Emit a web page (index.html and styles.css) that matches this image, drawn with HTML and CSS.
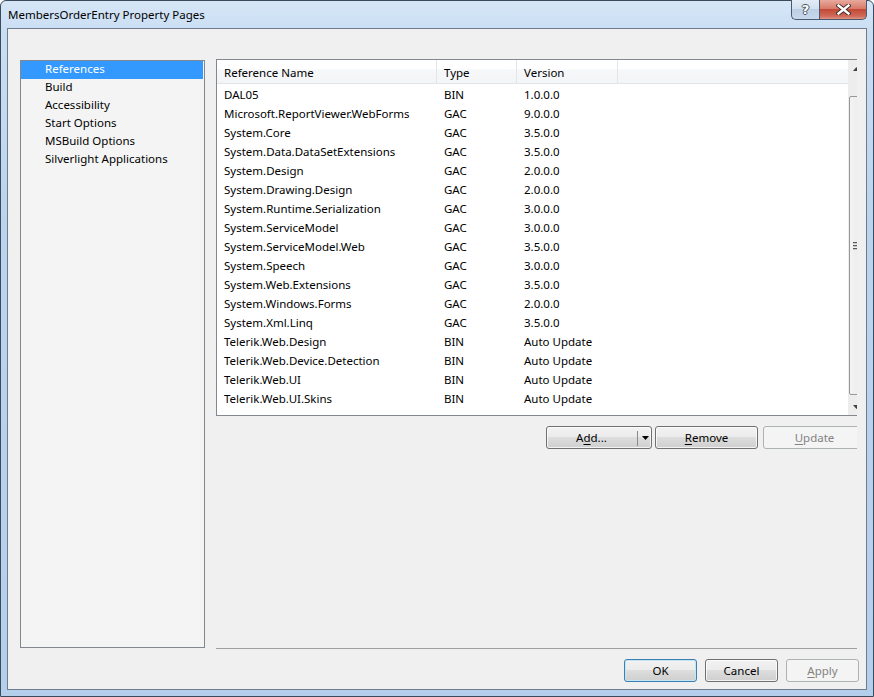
FILE: index.html
```html
<!DOCTYPE html>
<html>
<head>
<meta charset="utf-8">
<title>MembersOrderEntry Property Pages</title>
<link rel="stylesheet" href="styles.css">
</head>
<body>
<div class="window">
  <div class="titlebar">
    <span class="title">MembersOrderEntry Property Pages</span>
    <div class="caption-buttons">
      <div class="cbtn help"><span class="qmark">?</span></div>
      <div class="cbtn close">
        <svg width="15" height="11" viewBox="0 0 15 11">
          <path d="M2.5 1.5 L12.5 9.5 M12.5 1.5 L2.5 9.5" stroke="#3a2a2a" stroke-width="4.2" stroke-linecap="square" fill="none"/>
          <path d="M2.5 1.5 L12.5 9.5 M12.5 1.5 L2.5 9.5" stroke="#ffffff" stroke-width="2.4" stroke-linecap="square" fill="none"/>
        </svg>
      </div>
    </div>
  </div>
  <div class="client">
    <div class="main">
      <ul class="nav">
        <li class="nav-item selected">References</li>
        <li class="nav-item">Build</li>
        <li class="nav-item">Accessibility</li>
        <li class="nav-item">Start Options</li>
        <li class="nav-item">MSBuild Options</li>
        <li class="nav-item">Silverlight Applications</li>
      </ul>
      <div class="content">
        <div class="listview">
          <div class="lv-body">
            <div class="lv-header">
              <div class="col c1">Reference Name</div>
              <div class="col c2">Type</div>
              <div class="col c3">Version</div>
              <div class="col c4"></div>
            </div>
            <div class="lv-rows">
              <div class="row"><span class="c1">DAL05</span><span class="c2">BIN</span><span class="c3">1.0.0.0</span></div>
              <div class="row"><span class="c1">Microsoft.ReportViewer.WebForms</span><span class="c2">GAC</span><span class="c3">9.0.0.0</span></div>
              <div class="row"><span class="c1">System.Core</span><span class="c2">GAC</span><span class="c3">3.5.0.0</span></div>
              <div class="row"><span class="c1">System.Data.DataSetExtensions</span><span class="c2">GAC</span><span class="c3">3.5.0.0</span></div>
              <div class="row"><span class="c1">System.Design</span><span class="c2">GAC</span><span class="c3">2.0.0.0</span></div>
              <div class="row"><span class="c1">System.Drawing.Design</span><span class="c2">GAC</span><span class="c3">2.0.0.0</span></div>
              <div class="row"><span class="c1">System.Runtime.Serialization</span><span class="c2">GAC</span><span class="c3">3.0.0.0</span></div>
              <div class="row"><span class="c1">System.ServiceModel</span><span class="c2">GAC</span><span class="c3">3.0.0.0</span></div>
              <div class="row"><span class="c1">System.ServiceModel.Web</span><span class="c2">GAC</span><span class="c3">3.5.0.0</span></div>
              <div class="row"><span class="c1">System.Speech</span><span class="c2">GAC</span><span class="c3">3.0.0.0</span></div>
              <div class="row"><span class="c1">System.Web.Extensions</span><span class="c2">GAC</span><span class="c3">3.5.0.0</span></div>
              <div class="row"><span class="c1">System.Windows.Forms</span><span class="c2">GAC</span><span class="c3">2.0.0.0</span></div>
              <div class="row"><span class="c1">System.Xml.Linq</span><span class="c2">GAC</span><span class="c3">3.5.0.0</span></div>
              <div class="row"><span class="c1">Telerik.Web.Design</span><span class="c2">BIN</span><span class="c3">Auto Update</span></div>
              <div class="row"><span class="c1">Telerik.Web.Device.Detection</span><span class="c2">BIN</span><span class="c3">Auto Update</span></div>
              <div class="row"><span class="c1">Telerik.Web.UI</span><span class="c2">BIN</span><span class="c3">Auto Update</span></div>
              <div class="row"><span class="c1">Telerik.Web.UI.Skins</span><span class="c2">BIN</span><span class="c3">Auto Update</span></div>
            </div>
          </div>
          <div class="scrollbar">
            <div class="sb-arrow">
              <svg width="7" height="4" viewBox="0 0 7 4"><path d="M0 4 L3.5 0 L7 4 Z" fill="#404040"/></svg>
            </div>
            <div class="sb-track">
              <div class="sb-thumb"><div class="grip"><i></i><i></i><i></i></div></div>
            </div>
            <div class="sb-arrow">
              <svg width="7" height="4" viewBox="0 0 7 4"><path d="M0 0 L3.5 4 L7 0 Z" fill="#404040"/></svg>
            </div>
          </div>
        </div>
        <div class="ref-buttons">
          <div class="btn split add">
            <span class="split-main">A<u>d</u>d...</span>
            <span class="split-sep"></span>
            <span class="split-arrow"><svg width="7" height="4" viewBox="0 0 7 4"><path d="M0 0 L7 0 L3.5 4 Z" fill="#000"/></svg></span>
          </div>
          <div class="btn remove"><u>R</u>emove</div>
          <div class="btn disabled update"><u>U</u>pdate</div>
        </div>
        <div class="separator"></div>
      </div>
    </div>
    <div class="footer">
      <div class="btn dlg default">OK</div>
      <div class="btn dlg">Cancel</div>
      <div class="btn dlg disabled"><u>A</u>pply</div>
    </div>
  </div>
</div>
</body>
</html>
```

FILE: styles.css
```css
* { box-sizing: border-box; }

html, body {
  margin: 0;
  padding: 0;
  background: #ffffff;
}

body {
  font-family: "Noto Sans", "Open Sans", sans-serif;
  font-size: 11.5px;
  color: #000;
}

.window {
  width: 874px;
  height: 697px;
  border: 1px solid #3b4a5c;
  border-radius: 6px 6px 0 0;
  padding: 0 6px 6px 6px;
  background: linear-gradient(to bottom, #d6e6f7 0px, #cadef3 30px, #bcd5ef 200px, #b4cfec 697px);
  display: flex;
  flex-direction: column;
}

.titlebar {
  height: 27px;
  display: flex;
  justify-content: space-between;
  align-items: flex-start;
  padding-left: 1px;
}

.title {
  margin-top: 6px;
  font-size: 11.5px;
  line-height: 16px;
  color: #000;
}

.caption-buttons {
  display: flex;
  margin-top: -1px;
}

.cbtn {
  height: 20px;
  border: 1px solid #4a5a6e;
  border-top: none;
  display: flex;
  align-items: center;
  justify-content: center;
}

.help {
  width: 28px;
  border-right: none;
  border-radius: 0 0 0 5px;
  background: linear-gradient(to bottom, #e3ecf6 0%, #d3e0ee 45%, #bccfe4 50%, #c8d9ec 100%);
}

.qmark {
  font-family: "DejaVu Sans", sans-serif;
  font-weight: bold;
  font-size: 13px;
  line-height: 14px;
  color: #ffffff;
  text-shadow: -1px 0 #4b5563, 1px 0 #4b5563, 0 -1px #4b5563, 0 1px #4b5563;
}

.close {
  width: 48px;
  border-radius: 0 0 5px 0;
  background: linear-gradient(to bottom, #e7a99d 0%, #d77a69 45%, #c24a36 50%, #cf6a58 85%, #e39486 100%);
}

.client {
  flex: 1;
  border: 1px solid #6f7c8c;
  background: #f0f0f0;
  padding: 30px 7px 0 12px;
  display: flex;
  flex-direction: column;
}

.main {
  display: flex;
  height: 590px;
}

.nav {
  list-style: none;
  margin: 1px 0 0 0;
  padding: 0;
  width: 185px;
  height: 588px;
  border: 1px solid #828790;
  background: #f4f4f4;
}

.nav-item {
  height: 18px;
  line-height: 16px;
  padding-left: 24px;
  margin-right: 1px;
  white-space: nowrap;
}

.nav-item.selected {
  background: #3399ff;
  color: #ffffff;
}

.content {
  margin-left: 11px;
  width: 641px;
  overflow: hidden;
  display: flex;
  flex-direction: column;
}

.listview {
  width: 650px;
  flex: 0 0 357px;
  height: 357px;
  border: 1px solid #828790;
  background: #ffffff;
  display: flex;
}

.lv-body {
  flex: 1;
}

.lv-header {
  display: flex;
  height: 24px;
  border-bottom: 1px solid #e3e4e6;
  background: linear-gradient(to bottom, #ffffff 0%, #ffffff 40%, #f6f7f9 42%, #f4f5f7 100%);
}

.lv-header .col {
  line-height: 25px;
  padding-left: 7px;
  border-right: 1px solid #e3e5e8;
  white-space: nowrap;
}

.lv-header .col.c4 { border-right: none; }

.c1 { width: 220px; }
.c2 { width: 80px; }
.c3 { width: 101px; }
.c4 { flex: 1; }

.lv-rows {
  padding-top: 1px;
}

.lv-rows .row {
  display: flex;
  height: 19px;
  line-height: 19px;
}

.lv-rows .row span {
  padding-left: 7px;
  white-space: nowrap;
}

.scrollbar {
  width: 17px;
  display: flex;
  flex-direction: column;
  background: #ededed;
}

.sb-arrow {
  height: 17px;
  display: flex;
  align-items: center;
  justify-content: center;
}

.sb-track {
  flex: 1;
  padding: 19px 0 2px 0;
  display: flex;
  flex-direction: column;
}

.sb-thumb {
  height: 299px;
  margin-left: 1px;
  border: 1px solid #979797;
  border-radius: 2px;
  background: linear-gradient(to right, #f3f3f3, #e8e8e8);
  display: flex;
  align-items: center;
  justify-content: flex-start;
}

.grip {
  display: flex;
  flex-direction: column;
  gap: 1px;
  padding-left: 3px;
}

.grip i {
  display: block;
  width: 7px;
  height: 2px;
  background: linear-gradient(to bottom, #5a5a5a 50%, #c8c8c8 50%);
}

.ref-buttons {
  width: 650px;
  margin-top: 10px;
  display: flex;
  justify-content: flex-end;
}

.btn {
  height: 23px;
  border: 1px solid #707070;
  border-radius: 3px;
  background: linear-gradient(to bottom, #f2f2f2 0%, #ebebeb 49%, #dddddd 50%, #cfcfcf 100%);
  box-shadow: inset 0 0 0 1px rgba(255, 255, 255, 0.75);
  display: flex;
  align-items: center;
  justify-content: center;
  line-height: 16px;
  padding-top: 1px;
  white-space: nowrap;
}

.btn u { text-decoration: underline; text-underline-offset: 2px; }

.btn.disabled {
  border-color: #adb2b5;
  background: #f4f4f4;
  box-shadow: none;
  color: #838383;
}

.add {
  width: 106px;
  justify-content: flex-start;
}

.split-main {
  width: 89px;
  text-align: center;
}

.split-sep {
  width: 1px;
  height: 15px;
  background: #8a8a8a;
  margin-left: 1px;
}

.split-arrow {
  display: flex;
  align-items: center;
  padding-left: 4px;
}

.remove {
  width: 103px;
  margin-left: 3px;
}

.update {
  width: 103px;
  margin-left: 5px;
}

.separator {
  margin-top: auto;
  height: 1px;
  background: #a0a0a0;
  width: 650px;
}

.footer {
  margin-top: 10px;
  display: flex;
  justify-content: flex-end;
  gap: 8px;
}

.btn.dlg {
  width: 73px;
  height: 23px;
  padding-top: 0;
}

.btn.default {
  border-color: #3c7fb1;
  box-shadow: inset 0 0 0 1px #c4e5f6;
}
```
